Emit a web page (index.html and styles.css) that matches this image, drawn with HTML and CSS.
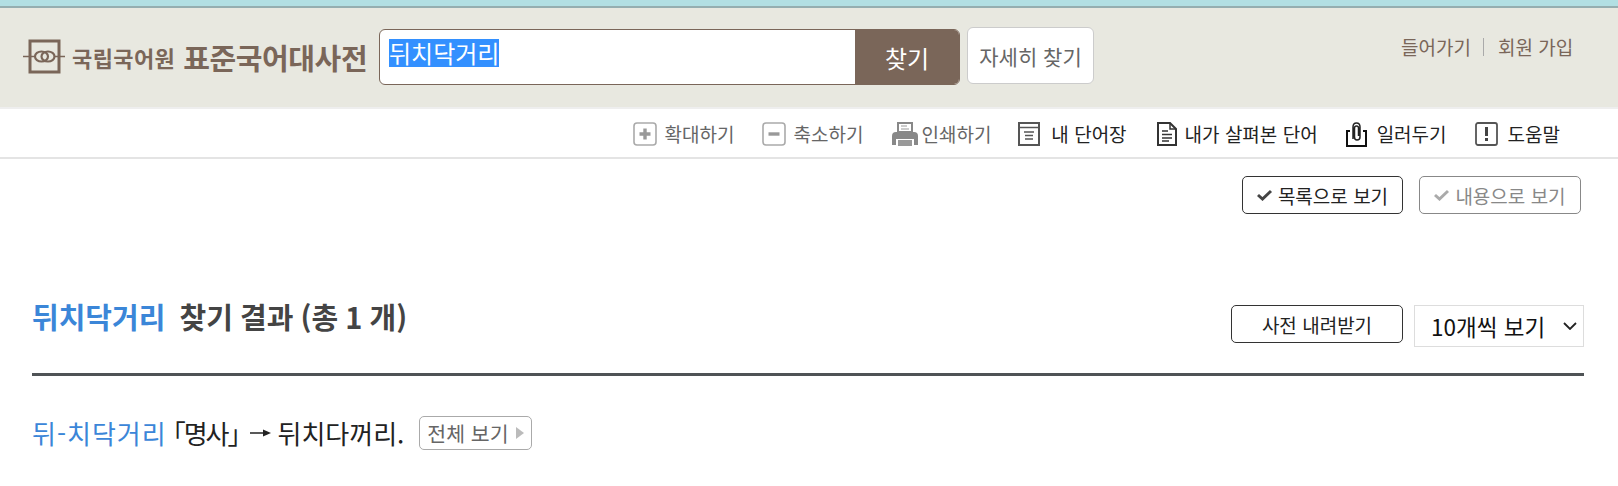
FILE: index.html

```html
<!DOCTYPE html>
<html lang="ko">
<head>
    <meta charset="UTF-8">
    <title>표준국어대사전</title>
    <link rel="stylesheet" href="styles.css">
</head>
<body>
<header class="top-bar">
    <div class="logo">
        <svg class="logo-mark" width="42" height="36" viewBox="0 0 42 36">
            <rect x="7" y="2" width="29" height="31" fill="none" stroke="#7a6659" stroke-width="3"/>
            <path d="M0 17.500H12M31 17.500H42" stroke="#7a6659" stroke-width="1.500"/>
            <ellipse cx="18.500" cy="17.500" rx="6.500" ry="5" fill="none" stroke="#7a6659" stroke-width="2.200"/>
            <ellipse cx="25" cy="17.500" rx="6.500" ry="5" fill="none" stroke="#7a6659" stroke-width="2.200"/>
        </svg>
        <span class="logo-org">국립국어원</span>
        <span class="logo-name">표준국어대사전</span>
    </div>
    <form class="search-box">
        <div class="search-input"><span class="selected">뒤치닥거리</span></div>
        <button type="button" class="search-button">찾기</button>
    </form>
    <a class="detail-search">자세히 찾기</a>
    <nav class="user-links">
        <a>들어가기</a>
        <a>회원 가입</a>
    </nav>
</header>

<div class="tool-bar">
    <a class="tool muted">
        <svg width="24" height="24" viewBox="0 0 24 24"><rect x="1" y="1" width="22" height="22" rx="3" fill="none" stroke="#aaa" stroke-width="1.6"/><path d="M12 6.5V17.5M6.5 12H17.5" stroke="#999" stroke-width="3.4"/></svg>
        확대하기
    </a>
    <a class="tool muted tool-minus">
        <svg width="24" height="24" viewBox="0 0 24 24"><rect x="1" y="1" width="22" height="22" rx="3" fill="none" stroke="#aaa" stroke-width="1.6"/><path d="M6.5 12H17.5" stroke="#999" stroke-width="3.4"/></svg>
        축소하기
    </a>
    <a class="tool muted tool-print">
        <svg width="26" height="24" viewBox="0 0 26 24"><path d="M6 1H20V10H6Z" fill="none" stroke="#888" stroke-width="2"/><path d="M9 4H15M9 7H17" stroke="#999" stroke-width="1.2"/><path d="M0 14Q0 10 4 10H22Q26 10 26 14V23H22V17H4V23H0Z" fill="#888"/><rect x="6" y="18" width="14" height="6" fill="#999"/></svg>
        인쇄하기
    </a>
    <a class="tool tool-book">
        <svg width="22" height="24" viewBox="0 0 22 24"><rect x="1" y="1" width="20" height="22" fill="none" stroke="#555" stroke-width="2"/><path d="M1 5.5H21" stroke="#555" stroke-width="1.5"/><path d="M6 10H16M7 13.5H15M7 17H15" stroke="#555" stroke-width="1.6"/></svg>
        내 단어장
    </a>
    <a class="tool tool-doc">
        <svg width="20" height="24" viewBox="0 0 20 24"><path d="M1 1H13L19 7V23H1Z" fill="none" stroke="#333" stroke-width="2"/><path d="M13 1V7H19" fill="none" stroke="#333" stroke-width="1.5"/><path d="M5 9H11M5 12.5H15M5 16H15M5 19H12" stroke="#333" stroke-width="1.5"/></svg>
        내가 살펴본 단어
    </a>
    <a class="tool tool-clip">
        <svg width="21" height="25" viewBox="0 0 21 25"><path d="M4 9H1V24H20V9H17" fill="none" stroke="#111" stroke-width="2"/><path d="M7 17V5Q7 1 10.500 1Q14 1 14 5V15Q14 18 11 18Q8.500 18 8.500 15V6Q8.500 4 10.500 4Q12.500 4 12.500 6V14" fill="none" stroke="#222" stroke-width="1.500"/></svg>
        일러두기
    </a>
    <a class="tool tool-help">
        <svg width="23" height="24" viewBox="0 0 23 24"><rect x="1" y="1" width="21" height="22" rx="2" fill="none" stroke="#555" stroke-width="1.800"/><path d="M11.500 5V14" stroke="#444" stroke-width="3"/><rect x="10" y="16" width="3" height="3" fill="#444"/></svg>
        도움말
    </a>
</div>

<div class="view-modes">
    <a class="view-button">
        <svg width="15" height="12" viewBox="0 0 15 12"><path d="M1 6L5.500 10L14 2" fill="none" stroke="#444" stroke-width="3"/></svg>
        목록으로 보기
    </a>
    <a class="view-button off">
        <svg width="15" height="12" viewBox="0 0 15 12"><path d="M1 6L5.500 10L14 2" fill="none" stroke="#aaa" stroke-width="3"/></svg>
        내용으로 보기
    </a>
</div>

<main class="results">
    <div class="result-head">
        <h1><span class="keyword">뒤치닥거리</span> 찾기 결과 (총 1 개)</h1>
        <div class="result-tools">
            <a class="download">사전 내려받기</a>
            <div class="page-size">
                10개씩 보기
                <svg width="14" height="8" viewBox="0 0 14 8"><path d="M1 1L7 7L13 1" fill="none" stroke="#222" stroke-width="1.800"/></svg>
            </div>
        </div>
    </div>
    <p class="entry">
        <a class="entry-word">뒤-치닥거리</a>
        <span class="entry-pos">「명사」</span>
        <svg class="entry-arrow" width="21" height="10" viewBox="0 0 21 10"><path d="M0 5H15" stroke="#222" stroke-width="1.500"/><path d="M13 1.500L21 5L13 8.500Z" fill="#222"/></svg>
        <span class="entry-text">뒤치다꺼리.</span>
        <a class="more">전체 보기<i class="more-arrow"></i></a>
    </p>
</main>
</body>
</html>
```

FILE: styles.css

```css
* {
    box-sizing: border-box;
}
body {
    margin: 0;
    background: #fff;
    color: #222;
    font-family: "Noto Sans CJK KR", "Noto Sans", sans-serif;
}
a {
    color: inherit;
    text-decoration: none;
}
svg {
    flex: none;
}

/* top */
.top-bar {
    display: flex;
    height: 109px;
    padding: 27px 0 0 23px;
    background: #e8e8e0;
    border-top: 6px solid #b2dfe3;
    border-bottom: 2px solid #eee;
    box-shadow: inset 0 2px 0 #95aeb0;
}
.logo {
    display: flex;
    align-items: center;
    width: 356px;
    height: 48px;
    color: #7a6659;
    font-weight: 700;
    white-space: nowrap;
}
.logo-mark {
    margin-right: 7px;
}
.logo-org {
    font-size: 22px;
    letter-spacing: 0.4px;
}
.logo-name {
    margin-left: 8px;
    font-size: 29px;
    letter-spacing: -0.4px;
}
.search-box {
    display: flex;
    width: 581px;
    height: 56px;
    margin-top: -4px;
    border: 1px solid #7a6659;
    border-radius: 6px;
    background: #fff;
    overflow: hidden;
}
.search-input {
    flex: 1;
    padding: 9px 0 0 9px;
    font-size: 24px;
    line-height: 28px;
    color: #222;
}
.selected {
    display: inline-block;
    background: #3390ff;
    color: #fff;
}
.search-button {
    width: 104px;
    border: 0;
    background: #7a6659;
    color: #fff;
    font-family: inherit;
    font-size: 24px;
    font-weight: 400;
}
.detail-search {
    display: flex;
    align-items: center;
    justify-content: center;
    width: 127px;
    height: 57px;
    margin: -6px 0 0 7px;
    border: 1px solid #ccc;
    border-radius: 6px;
    background: #fff;
    color: #666;
    font-size: 21px;
}
.user-links {
    display: flex;
    margin: 2px 0 0 307px;
    color: #7a6659;
    font-size: 19px;
    line-height: 24px;
}
.user-links a + a {
    margin-left: 12px;
    padding-left: 15px;
    background: linear-gradient(#aaa, #aaa) left 3px / 1px 18px no-repeat;
}

/* tools */
.tool-bar {
    display: flex;
    justify-content: flex-end;
    height: 50px;
    padding: 12px 58px 0 0;
    border-bottom: 2px solid #e4e4e4;
    color: #222;
    font-size: 19px;
    line-height: 26px;
}
.tool {
    display: flex;
    align-items: center;
    height: 26px;
    gap: 8px;
    margin-left: 30px;
    white-space: nowrap;
}
.tool.muted {
    color: #666;
}
.tool-minus {
    margin-left: 27px;
}
.tool-print {
    gap: 3px;
    margin-left: 29px;
}
.tool-book {
    gap: 11px;
    margin-left: 27px;
}
.tool-clip {
    gap: 10px;
    margin-left: 28px;
}
.tool-help {
    gap: 10px;
    margin-left: 28px;
}
.view-modes {
    display: flex;
    justify-content: flex-end;
    gap: 16px;
    padding: 17px 37px 0 0;
}
.view-button {
    display: flex;
    align-items: center;
    justify-content: center;
    gap: 6px;
    width: 161px;
    height: 38px;
    border: 1px solid #333;
    border-radius: 5px;
    font-size: 19px;
}
.view-button.off {
    width: 162px;
    border-color: #888;
    color: #888;
}

/* results */
.results {
    margin: 91px 34px 0 32px;
}
.result-head {
    display: flex;
    justify-content: space-between;
    height: 71px;
    border-bottom: 3px solid #4f5356;
}
h1 {
    margin: -11px 0 0;
    color: #444;
    font-size: 29px;
    font-weight: 700;
    line-height: 44px;
    word-spacing: -1px;
}
.keyword {
    margin-right: 7px;
    color: #3b86d8;
}
.result-tools {
    display: flex;
    align-items: flex-start;
    gap: 11px;
}
.download {
    display: flex;
    align-items: center;
    justify-content: center;
    width: 172px;
    height: 38px;
    border: 1px solid #333;
    border-radius: 5px;
    font-size: 19px;
}
.page-size {
    display: flex;
    align-items: center;
    justify-content: space-between;
    width: 170px;
    height: 42px;
    padding: 0 6px 0 16px;
    border: 1px solid #ddd;
    color: #111;
    font-size: 22.500px;
}
.entry {
    display: flex;
    align-items: center;
    margin: 40px 0 0;
    font-size: 26px;
    line-height: 34px;
}
.entry-word {
    letter-spacing: 1px;
    color: #3b86d8;
}
.entry-pos {
    margin-left: -7px;
    letter-spacing: -2px;
}
.entry-arrow {
    margin: 0 7px 0 -2px;
}
.more {
    display: flex;
    align-items: center;
    gap: 7px;
    height: 34px;
    margin-left: 15px;
    padding: 0 7px;
    border: 1px solid #aaa;
    border-radius: 5px;
    color: #666;
    font-size: 20.500px;
}
.more-arrow {
    border-left: 8px solid #bbb;
    border-top: 6px solid transparent;
    border-bottom: 6px solid transparent;
}
```
